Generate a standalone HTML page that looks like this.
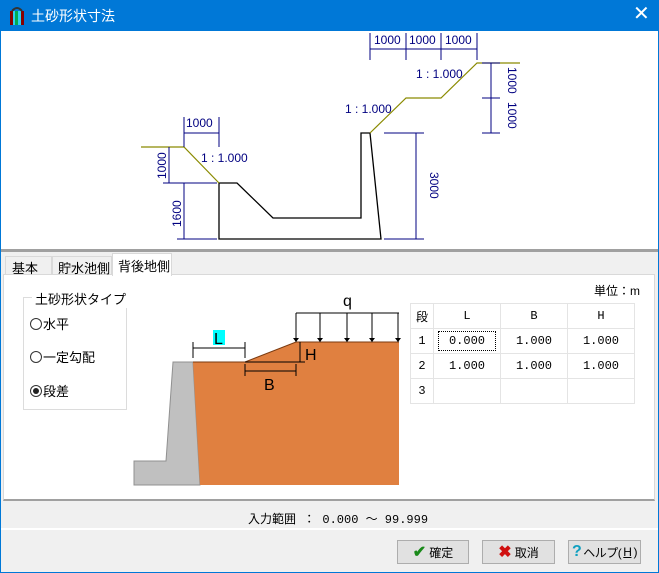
<!DOCTYPE html>
<html><head><meta charset="utf-8"><style>
*{margin:0;padding:0;box-sizing:border-box}
body{width:659px;height:573px;position:relative;background:#f0f0f0;font-family:"Liberation Sans","Noto Sans CJK JP",sans-serif;font-size:12px;color:#000;overflow:hidden}
.a{position:absolute;white-space:nowrap}
.btn{position:absolute;top:540px;height:24px;border:1px solid #adadad;background:#e1e1e1;font-size:12px;display:flex;align-items:center;justify-content:center;gap:3px;white-space:nowrap}
td{border:1px solid #e4e4e4;text-align:center;font-family:"Liberation Mono","Noto Sans CJK JP",monospace;font-size:12px;height:25px}
.r{display:inline-block;width:12px;height:12px;border:1px solid #333;border-radius:50%;vertical-align:-1px;margin-right:1px;position:relative;background:#fff}
.r.on::after{content:"";position:absolute;left:2px;top:2px;width:6px;height:6px;border-radius:50%;background:#222}
</style></head><body>
<div class="a" style="left:0;top:0;width:659px;height:573px;border:1px solid #0078d7"></div>
<div class="a" style="left:0;top:0;width:659px;height:31px;background:#0078d7"></div>
<svg class="a" style="left:8px;top:6px" width="18" height="20"><rect x="2" y="5" width="14" height="14" fill="#800"/><rect x="5" y="5" width="8" height="14" fill="#2cd0f0"/><rect x="7" y="5" width="3" height="14" fill="#0a5"/><path d="M4 5 Q9 -1 14 5" stroke="#333" fill="none" stroke-width="2"/></svg>
<div class="a" style="left:31px;top:6px;color:#fff;font-size:14px">土砂形状寸法</div>
<div class="a" style="left:633px;top:3px;color:#fff;font-size:20px;line-height:22px">✕</div>
<div class="a" style="left:1px;top:31px;width:657px;height:218px;background:#fff"></div>
<div class="a" style="left:1px;top:249px;width:657px;height:3px;background:#a0a0a0"></div>
<svg class="a" style="left:0;top:0" width="659" height="250" font-family="Liberation Sans" font-size="12">
<g stroke="#000" fill="none" stroke-width="1.3">
<polyline points="219,183 237,183 273,218 361,218 361,133 370,133 381,239 219,239 219,183"/>
</g>
<g stroke="#8a8a00" fill="none" stroke-width="1.2">
<polyline points="141,147 184,147 219,183"/>
<polyline points="370,133 406,98 441,98 477,63 520,63"/>
</g>
<g stroke="#000080" fill="none" stroke-width="1">
<line x1="370" y1="33" x2="370" y2="60"/><line x1="406" y1="33" x2="406" y2="60"/><line x1="441" y1="33" x2="441" y2="60"/><line x1="477" y1="33" x2="477" y2="60"/>
<line x1="370" y1="49" x2="477" y2="49"/>
<line x1="482" y1="63" x2="500" y2="63"/><line x1="482" y1="98" x2="500" y2="98"/><line x1="482" y1="133" x2="500" y2="133"/>
<line x1="491" y1="63" x2="491" y2="133"/>
<line x1="384" y1="133" x2="424" y2="133"/><line x1="384" y1="239" x2="424" y2="239"/><line x1="416" y1="133" x2="416" y2="239"/>
<line x1="184" y1="117" x2="184" y2="147"/><line x1="219" y1="117" x2="219" y2="147"/><line x1="184" y1="133" x2="219" y2="133"/>
<line x1="163" y1="183" x2="217" y2="183"/><line x1="169" y1="147" x2="169" y2="183"/>
<line x1="177" y1="239" x2="217" y2="239"/><line x1="184" y1="183" x2="184" y2="239"/>
</g>
<g fill="#000080">
<text x="374" y="44">1000</text><text x="409" y="44">1000</text><text x="445" y="44">1000</text>
<text x="186" y="127">1000</text>
<text transform="translate(508,67) rotate(90)">1000</text>
<text transform="translate(508,102) rotate(90)">1000</text>
<text transform="translate(430,172) rotate(90)">3000</text>
<text transform="translate(166,179) rotate(-90)">1000</text>
<text transform="translate(181,227) rotate(-90)">1600</text>
<text x="201" y="162">1 : 1.000</text><text x="345" y="113">1 : 1.000</text><text x="416" y="78">1 : 1.000</text>
</g>
</svg>
<div class="a" style="left:3px;top:274px;width:652px;height:227px;background:#fff;border:1px solid #d9d9d9;border-bottom:2px solid #a0a0a0"></div>
<div class="a" style="left:5px;top:256px;width:47px;height:19px;border:1px solid #d9d9d9;padding:1px 0 0 6px;font-size:13px">基本</div>
<div class="a" style="left:52px;top:256px;width:60px;height:19px;border:1px solid #d9d9d9;padding:1px 0 0 5px;font-size:13px">貯水池側</div>
<div class="a" style="left:112px;top:253px;width:60px;height:23px;border:1px solid #d9d9d9;border-bottom:none;background:#fff;padding:2px 0 0 5px;font-size:13px">背後地側</div>
<div class="a" style="left:23px;top:297px;width:104px;height:113px;border:1px solid #dcdcdc"></div>
<div class="a" style="left:32px;top:289px;background:#fff;padding:0 3px;font-size:13px">土砂形状タイプ</div>
<div class="a" style="left:30px;top:314px;font-size:13px"><span class="r"></span>水平</div>
<div class="a" style="left:30px;top:347px;font-size:13px"><span class="r"></span>一定勾配</div>
<div class="a" style="left:30px;top:381px;font-size:13px"><span class="r on"></span>段差</div>
<svg class="a" style="left:0;top:0" width="659" height="573" font-family="Liberation Sans">
<polygon points="134,461 166,461 173,362 193,362 200,485 134,485" fill="#c0c0c0" stroke="#909090"/>
<polygon points="193,362 245,362 296,342 399,342 399,485 200,485" fill="#e08040"/>
<polyline points="193,362 245,362 296,342 399,342" stroke="#7a3a10" fill="none"/>
<g stroke="#000" fill="none">
<line x1="296" y1="313" x2="399" y2="313"/>
<line x1="296" y1="313" x2="296" y2="342"/><line x1="320" y1="313" x2="320" y2="342"/><line x1="347" y1="313" x2="347" y2="342"/><line x1="372" y1="313" x2="372" y2="342"/><line x1="398" y1="313" x2="398" y2="342"/>
<line x1="193" y1="342" x2="193" y2="358"/><line x1="245" y1="342" x2="245" y2="358"/><line x1="193" y1="348" x2="245" y2="348"/>
<line x1="245" y1="362" x2="305" y2="362"/><line x1="245" y1="364" x2="245" y2="376"/><line x1="296" y1="364" x2="296" y2="376"/><line x1="245" y1="371" x2="296" y2="371"/>
<line x1="300" y1="342" x2="300" y2="362"/>
</g>
<g fill="#000"><path d="M293,338 l3,4 l3,-4z M317,338 l3,4 l3,-4z M344,338 l3,4 l3,-4z M369,338 l3,4 l3,-4z M395,338 l3,4 l3,-4z"/></g>
<rect x="213" y="330" width="12" height="15" fill="#00ffff"/>
<text x="214" y="344" font-size="16">L</text>
<text x="264" y="390" font-size="16">B</text>
<text x="305" y="360" font-size="16">H</text>
<text x="343" y="306" font-size="16">q</text>
</svg>
<div class="a" style="left:594px;top:282px">単位：m</div>
<table class="a" style="left:410px;top:303px;width:225px;border-collapse:collapse;border:1px solid #a0a0a0">
<tr><td style="width:23px">段</td><td style="width:67px">L</td><td style="width:67px">B</td><td>H</td></tr>
<tr><td>1</td><td><span style="outline:1px dotted #000;padding:2px 10px">0.000</span></td><td>1.000</td><td>1.000</td></tr>
<tr><td>2</td><td>1.000</td><td>1.000</td><td>1.000</td></tr>
<tr><td>3</td><td></td><td></td><td></td></tr>
</table>
<div class="a" style="left:1px;top:528px;width:657px;height:2px;background:#fff"></div>
<div class="a" style="left:248px;top:510px;font-family:'Liberation Mono','Noto Sans CJK JP',monospace">入力範囲 ： 0.000 〜 99.999</div>
<div class="btn" style="left:397px;width:72px"><span style="color:#1a8a1a;font-size:16px;font-weight:bold">✔</span>確定</div>
<div class="btn" style="left:482px;width:73px"><span style="color:#d01010;font-size:16px;font-weight:bold">✖</span>取消</div>
<div class="btn" style="left:568px;width:73px;gap:2px;letter-spacing:-0.5px"><span style="color:#10a0c0;font-size:16px;font-weight:bold">?</span>ヘルプ(<u>H</u>)</div>
</body></html>
